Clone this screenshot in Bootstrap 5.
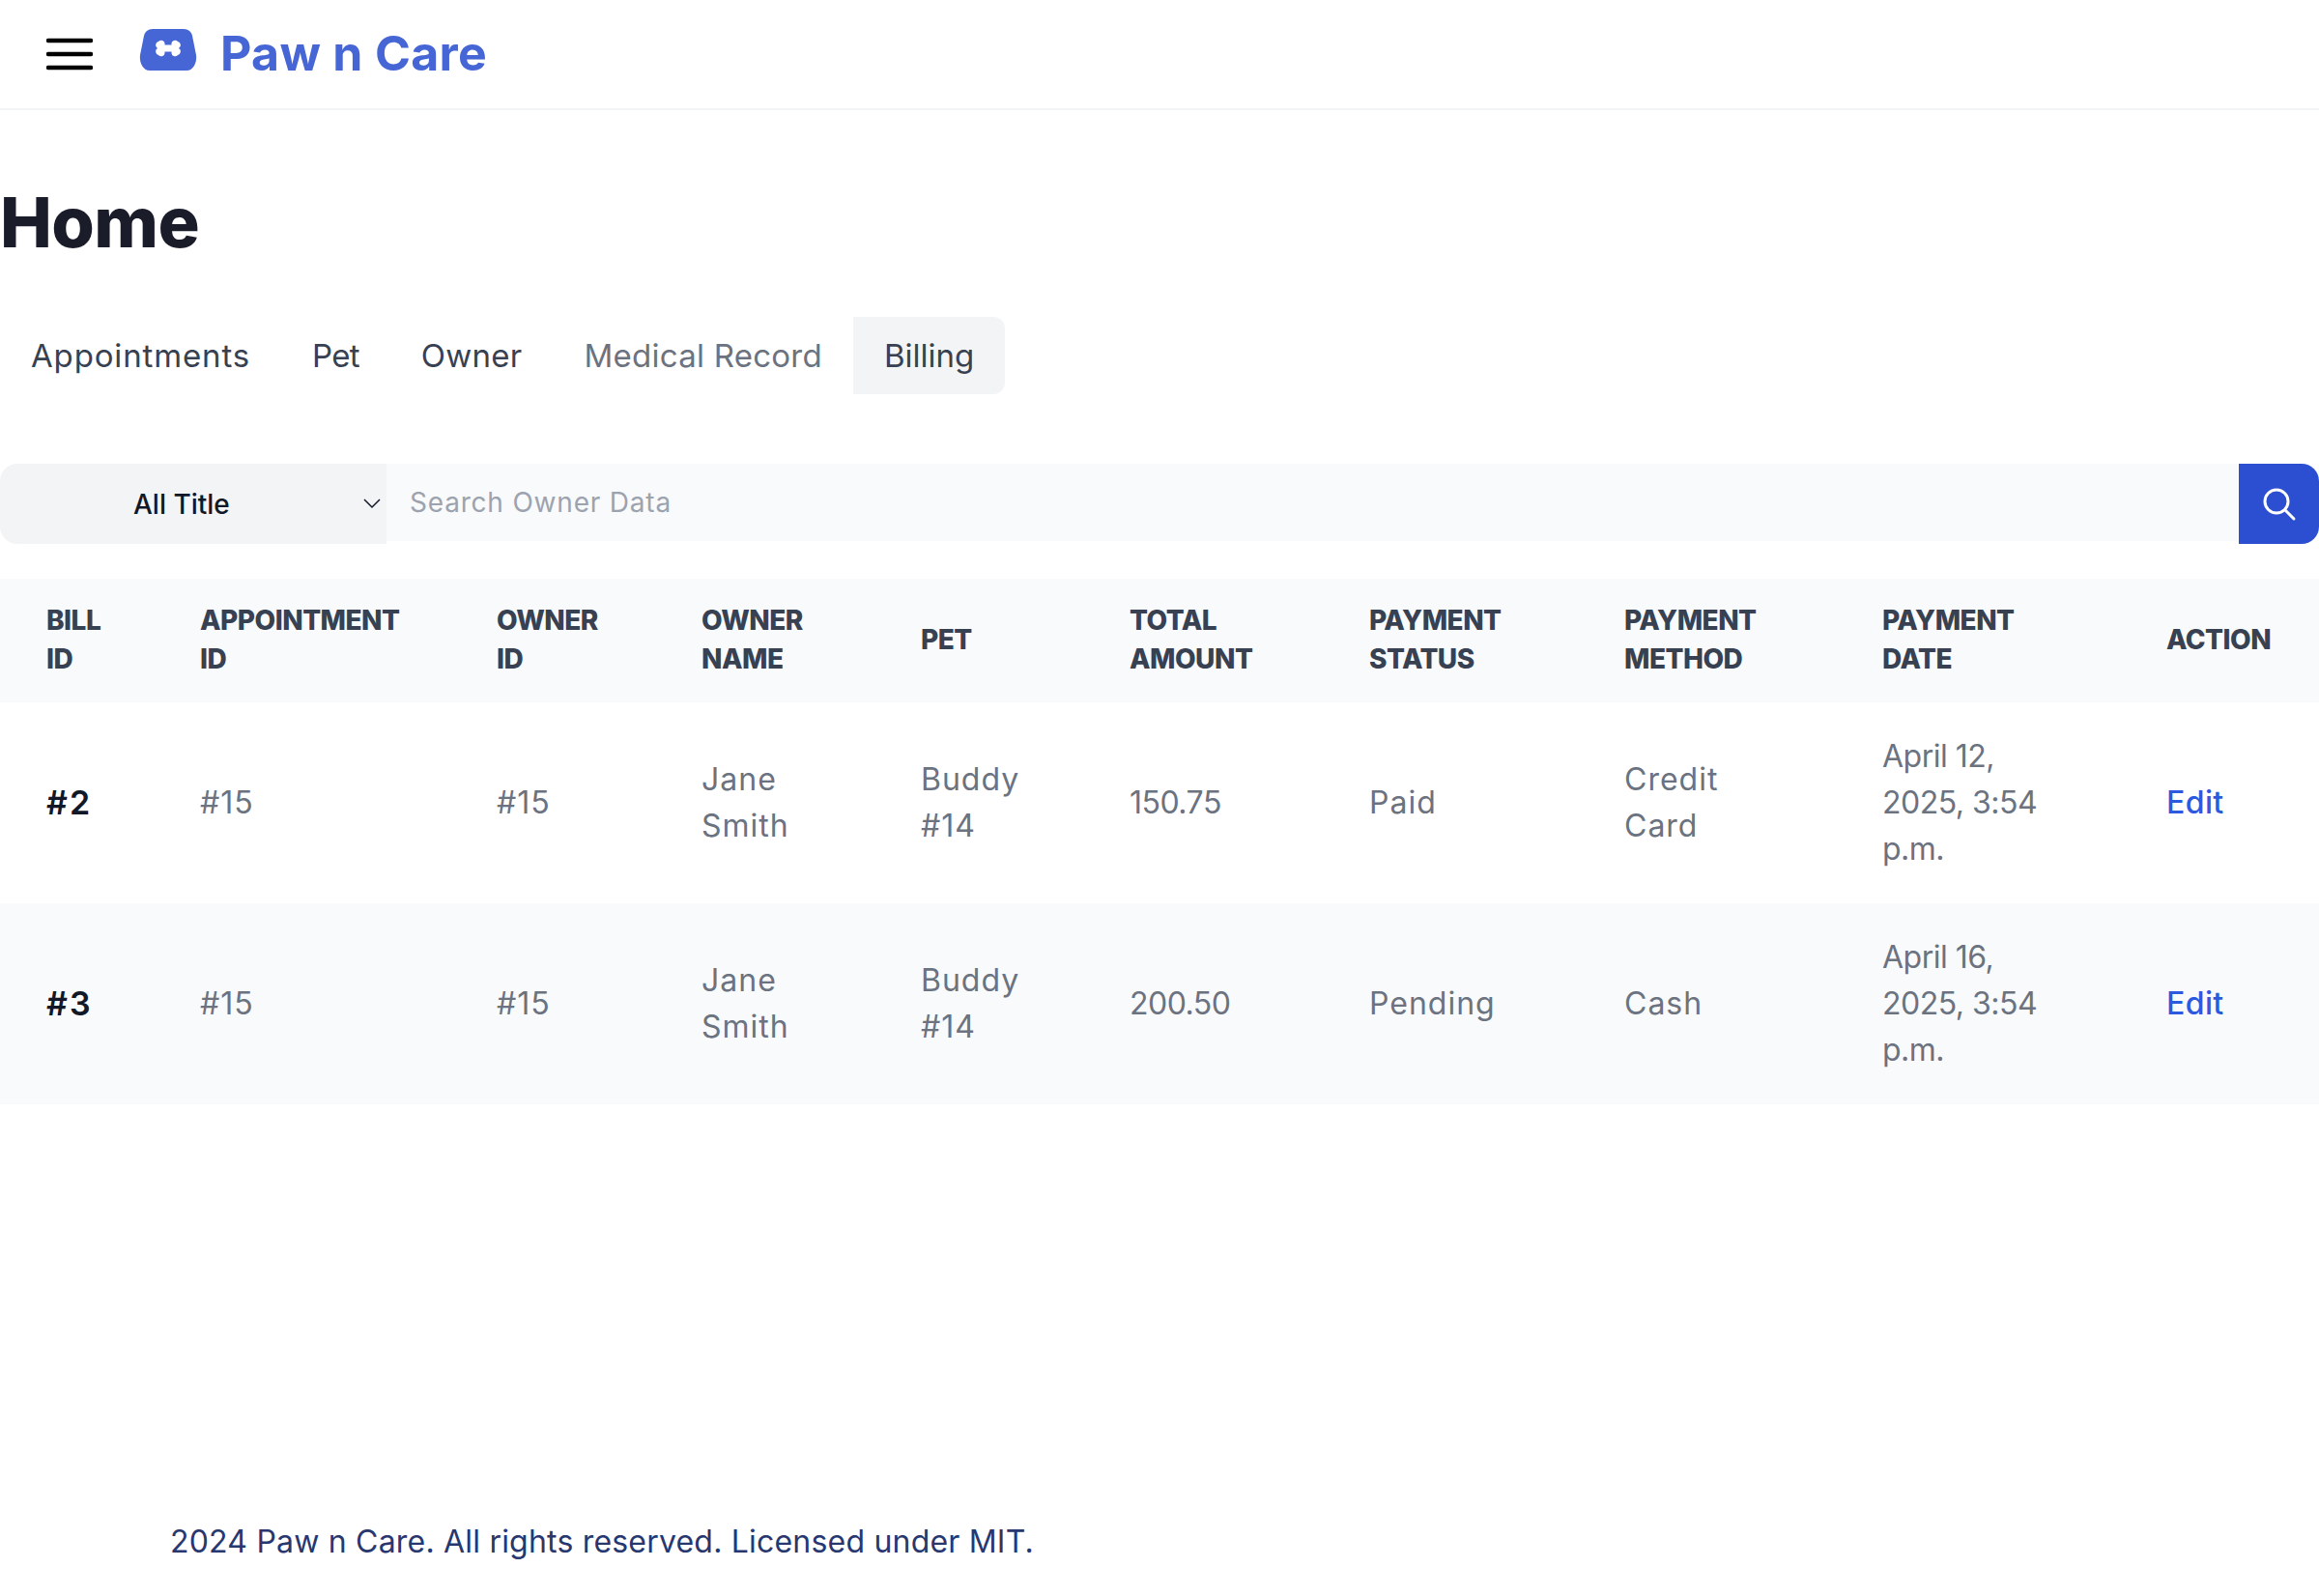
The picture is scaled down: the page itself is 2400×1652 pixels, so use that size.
<!DOCTYPE html>
<html lang="en">
<head>
  <meta charset="UTF-8" />
  <title>Paw n Care</title>
  <link href="https://cdn.jsdelivr.net/npm/bootstrap@5.3.3/dist/css/bootstrap.min.css" rel="stylesheet" />
  <style>
    body {
      font-family: "Inter", "Liberation Sans", sans-serif;
      background: #fff;
      min-height: 1652px;
      display: flex;
      flex-direction: column;
    }
    .top-bar {
      height: 114px;
      padding-left: 48px;
      gap: 47px;
      border-bottom: 2px solid #f3f4f6;
    }
    .burger { width: 48px; height: 34px; }
    .brand-logo { margin-right: 23px; margin-bottom: 6px; }
    .brand-name {
      font-size: 50px;
      font-weight: 650;
      color: #4766d6;
      letter-spacing: 0.3px;
      line-height: 1;
      padding-bottom: 2px;
      text-decoration: none;
    }
    .page-title {
      font-size: 72px;
      font-weight: 800;
      color: #1a1c2a;
      letter-spacing: -0.6px;
      line-height: 72px;
      margin: 80px 0 62px;
    }
    .tab-link {
      font-size: 33px;
      line-height: 48px;
      letter-spacing: 0.25px;
      padding: 16px 32px;
      color: #374151;
      border-radius: 0 12px 12px 0;
      text-decoration: none;
    }
    .tab-link.wide-tab { letter-spacing: 0.85px; }
    .tab-link.tight-tab { letter-spacing: -0.7px; }
    .tab-link.muted-tab { color: #6b7280; }
    .tab-link.on-tab { background: #f3f4f6; letter-spacing: 0; }
    .search-row { margin-top: 72px; align-items: flex-start; }
    .title-select {
      width: 400px;
      height: 83px;
      background: #f3f4f6;
      border-radius: 18px 0 0 18px;
      font-size: 28px;
      font-weight: 500;
      color: #111827;
      padding-left: 138px;
      padding-right: 6px;
    }
    .search-input {
      height: 80px;
      background: #f9fafb;
      border: 0;
      outline: 0;
      font-size: 28px;
      letter-spacing: 0.8px;
      padding: 0 24px;
      color: #111827;
    }
    .search-input::placeholder { color: #9ca3af; }
    .search-btn {
      width: 83px;
      height: 83px;
      background: #2b4fd0;
      border: 0;
      border-radius: 0 18px 18px 0;
      padding: 0;
    }
    .bill-table {
      margin-top: 36px;
      width: 2400px;
      table-layout: fixed;
      border-collapse: collapse;
    }
    .bill-table th {
      background: #f9fafb;
      color: #374151;
      font-size: 28px;
      line-height: 40px;
      font-weight: 800;
      letter-spacing: -0.5px;
      text-transform: uppercase;
      padding: 23px 0 25px 48px;
      vertical-align: middle;
    }
    .bill-table td {
      font-size: 32px;
      line-height: 48px;
      letter-spacing: 1px;
      color: #6b7280;
      padding: 32px 0 32px 48px;
      vertical-align: middle;
    }
    .bill-table td.num-cell { letter-spacing: -0.5px; }
    .bill-table td.bill-id { color: #111827; font-size: 34px; font-weight: 600; letter-spacing: 2px; }
    .bill-table td a { color: #2b59e0; font-weight: 500; letter-spacing: 0.4px; text-decoration: none; }
    .bill-table tr.alt-row td { background: #f9fafb; }
    .site-foot {
      margin-top: auto;
      padding: 0 0 32px 176px;
      font-size: 32px;
      line-height: 48px;
      letter-spacing: 0.2px;
      color: #27376f;
    }
  </style>
</head>
<body>

  <nav class="top-bar d-flex align-items-center">
    <svg class="burger" viewBox="0 0 48 34" fill="none" stroke="#000" stroke-width="4.5" stroke-linecap="round">
      <path d="M2 3h44M2 17h44M2 31h44" />
    </svg>
    <a class="d-flex align-items-center brand-name" href="#">
      <svg class="brand-logo" width="62" height="44" viewBox="0 0 60 44">
        <path fill="#4766d6" d="M14 0h32c5 0 8 3 9 7l4 20c1 8-3 16-10 16H11C4 43 0 35 1 27L5 7c1-4 4-7 9-7z" />
        <path fill="#fff" d="M20 13a3.8 3.8 0 0 1 6.6 2.6l-.2 .9h7.2l-.2-.9a3.8 3.8 0 0 1 6.6-2.6 3.8 3.8 0 0 1 1 7 3.8 3.8 0 0 1-1 7 3.8 3.8 0 0 1-6.6-2.6l.2-.9h-7.2l.2 .9a3.8 3.8 0 0 1-6.6 2.6 3.8 3.8 0 0 1-1-7 3.8 3.8 0 0 1 1-7z" />
      </svg>
      Paw n Care
    </a>
  </nav>

  <main>
    <h1 class="page-title">Home</h1>

    <div class="d-flex">
      <a class="tab-link wide-tab" href="#">Appointments</a>
      <a class="tab-link tight-tab" href="#">Pet</a>
      <a class="tab-link" href="#">Owner</a>
      <a class="tab-link muted-tab" href="#">Medical Record</a>
      <a class="tab-link on-tab" href="#">Billing</a>
    </div>

    <div class="d-flex search-row">
      <div class="title-select d-flex align-items-center justify-content-between">
        <span>All Title</span>
        <svg width="18" height="11" viewBox="0 0 18 11" fill="none" stroke="#111827" stroke-width="1.5"><path d="M1 1l8 8 8-8" /></svg>
      </div>
      <input class="search-input flex-grow-1" type="text" placeholder="Search Owner Data" />
      <button class="search-btn d-flex align-items-center justify-content-center" type="button">
        <svg width="36" height="36" viewBox="0 0 36 36" fill="none" stroke="#fff" stroke-width="3" stroke-linecap="round">
          <circle cx="15" cy="15" r="12" /><path d="M24 24l9 9" />
        </svg>
      </button>
    </div>

    <table class="bill-table">
      <colgroup>
        <col style="width:159px"><col style="width:307px"><col style="width:212px"><col style="width:227px"><col style="width:216px">
        <col style="width:248px"><col style="width:264px"><col style="width:267px"><col style="width:294px"><col style="width:206px">
      </colgroup>
      <thead>
        <tr>
          <th>Bill<br>ID</th><th>Appointment<br>ID</th><th>Owner<br>ID</th><th>Owner<br>Name</th><th>Pet</th>
          <th>Total<br>Amount</th><th>Payment<br>Status</th><th>Payment<br>Method</th><th>Payment<br>Date</th><th>Action</th>
        </tr>
      </thead>
      <tbody>
        <tr>
          <td class="bill-id">#2</td><td>#15</td><td>#15</td><td>Jane<br>Smith</td><td>Buddy<br>#14</td>
          <td class="num-cell">150.75</td><td>Paid</td><td>Credit<br>Card</td><td class="num-cell">April 12,<br>2025, 3:54<br>p.m.</td><td><a href="#">Edit</a></td>
        </tr>
        <tr class="alt-row">
          <td class="bill-id">#3</td><td>#15</td><td>#15</td><td>Jane<br>Smith</td><td>Buddy<br>#14</td>
          <td class="num-cell">200.50</td><td>Pending</td><td>Cash</td><td class="num-cell">April 16,<br>2025, 3:54<br>p.m.</td><td><a href="#">Edit</a></td>
        </tr>
      </tbody>
    </table>
  </main>

  <footer class="site-foot">2024 Paw n Care. All rights reserved. Licensed under MIT.</footer>

</body>
</html>
